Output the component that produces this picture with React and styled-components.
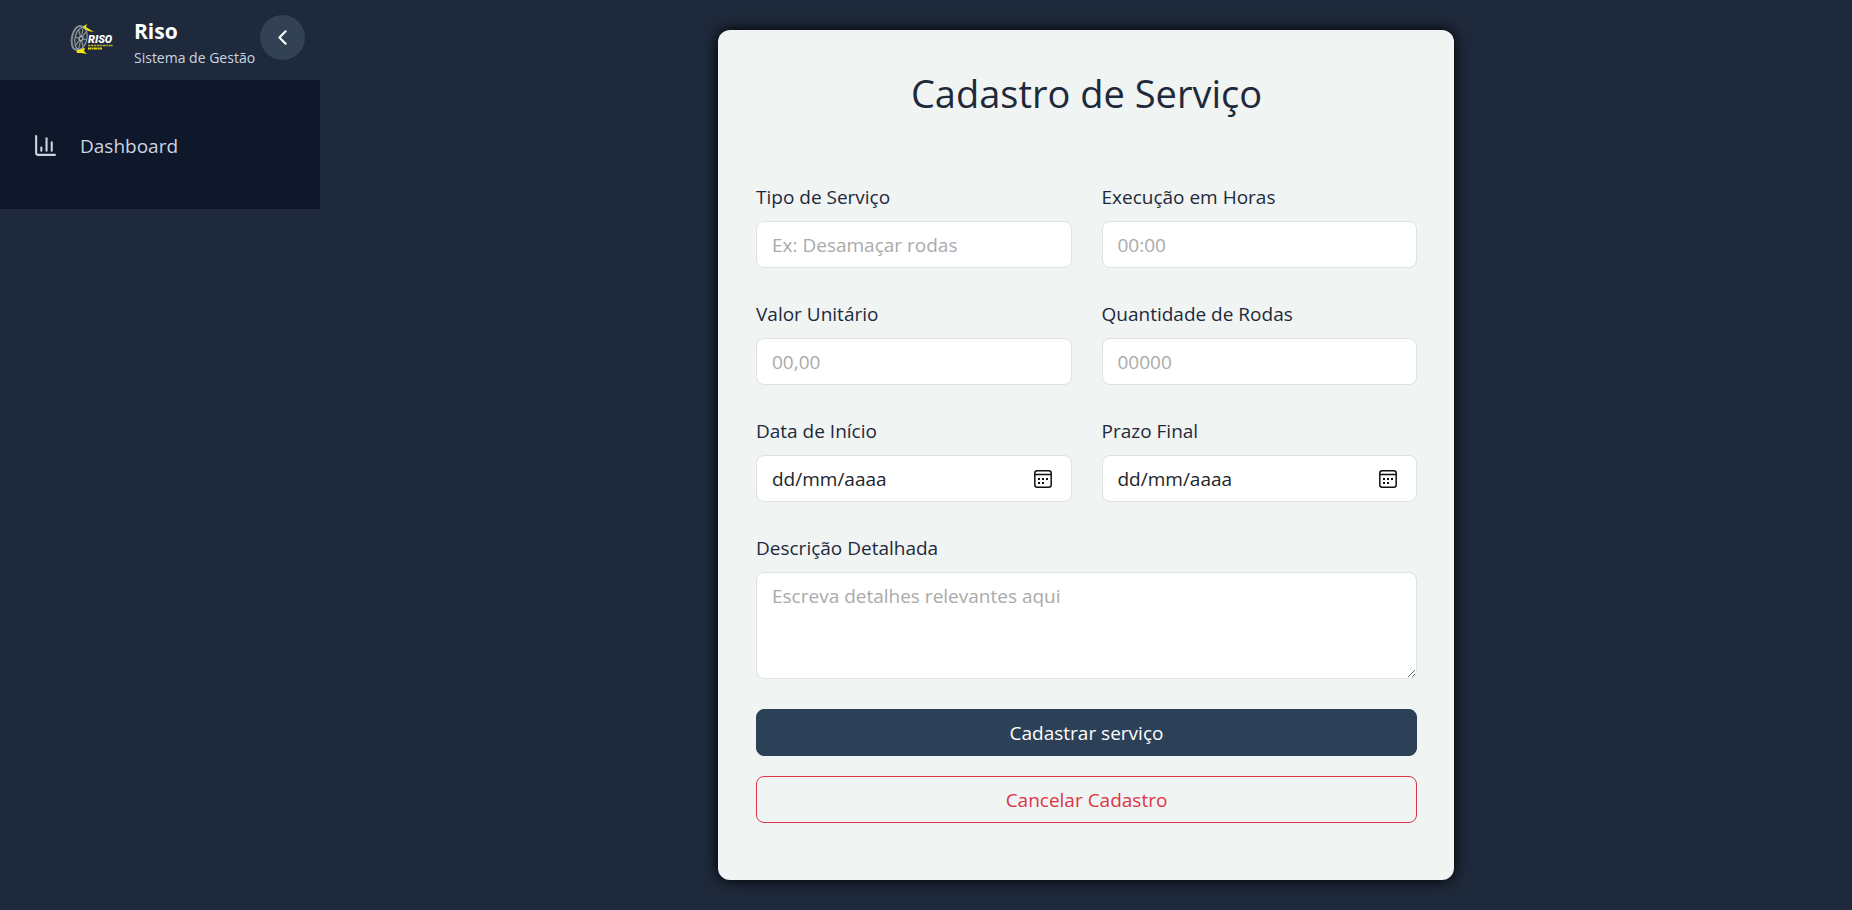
import React from "react";
import styled, { createGlobalStyle } from "styled-components";
import { ChartColumn, ChevronLeft } from "lucide-react";

const GlobalStyle = createGlobalStyle`
  *, *::before, *::after { box-sizing: border-box; }
  body {
    margin: 0;
    background: #1e293b;
    color: #1e293b;
    font-family: "Segoe UI", "Open Sans", "Noto Sans", sans-serif;
    font-size: 19px;
    line-height: 30px;
  }
  h1, p { margin: 0; }
  button, input, textarea { font: inherit; }
`;

const Page = styled.div`
  display: flex;
  min-height: 100vh;
`;

const Sidebar = styled.aside`
  flex: 0 0 320px;
`;

const SidebarHeader = styled.header`
  display: flex;
  align-items: flex-start;
  height: 80px;
  padding: 15px 15px 0 70px;
`;

const Logo = styled.svg`
  flex: none;
  width: 48px;
  height: 32px;
  margin-top: 8px;
`;

const Brand = styled.div`
  flex: 1;
  margin-left: 16px;
  white-space: nowrap;
`;

const BrandName = styled.p`
  color: #fff;
  font-size: 21px;
  font-weight: 700;
  line-height: 33px;
`;

const BrandTagline = styled.p`
  color: #cbd5e1;
  font-size: 14px;
  line-height: 20px;
`;

const ToggleButton = styled.button`
  display: grid;
  place-items: center;
  flex: none;
  width: 45px;
  height: 45px;
  padding: 0;
  border: 0;
  border-radius: 50%;
  background: #334155;
  color: #fff;
  cursor: pointer;
`;

const Nav = styled.nav`
  padding: 31px 0 29px;
  background: #0f172a;
`;

const NavLink = styled.a`
  display: flex;
  align-items: center;
  gap: 22px;
  height: 69px;
  padding: 0 33px;
  color: #cbd5e1;
  text-decoration: none;
`;

const Main = styled.main`
  flex: 1;
  display: flex;
  justify-content: center;
  align-items: flex-start;
  padding: 30px;
`;

const Card = styled.form`
  width: 100%;
  max-width: 736px;
  padding: 39px 37px 57px 38px;
  border-radius: 12px;
  background: #f0f4f3;
  box-shadow: 0 0 15px #000;
`;

const Title = styled.h1`
  margin-bottom: 65px;
  color: #1e293b;
  font-size: 38px;
  font-weight: 400;
  line-height: 48px;
  text-align: center;
`;

const Fields = styled.div`
  display: grid;
  grid-template-columns: 1fr 1fr;
  gap: 31px 30px;
`;

const Field = styled.div`
  display: flex;
  flex-direction: column;
  gap: 9px;
  grid-column: ${({ $wide }) => ($wide ? "1 / -1" : "auto")};
`;

const Label = styled.label`
  line-height: 30px;
`;

const Control = styled.div`
  display: flex;
  align-items: center;
  height: ${({ $tall }) => ($tall ? "107px" : "47px")};
  border: 1px solid #dee2e6;
  border-radius: 8px;
  background: #fff;
  overflow: hidden;
`;

const TextInput = styled.input`
  flex: 1;
  min-width: 0;
  height: 100%;
  padding: 0 15px;
  border: 0;
  outline: 0;
  background: transparent;
  color: #212529;

  &::placeholder {
    color: ${({ $date }) => ($date ? "#212529" : "#aaa")};
    opacity: 1;
  }
`;

const TextArea = styled.textarea`
  flex: 1;
  min-width: 0;
  height: 100%;
  padding: 8px 15px;
  border: 0;
  outline: 0;
  background: transparent;
  color: #212529;
  resize: vertical;

  &::placeholder {
    color: #aaa;
    opacity: 1;
  }
`;

const PickerButton = styled.button`
  display: grid;
  place-items: center;
  width: 20px;
  height: 20px;
  margin-right: 18px;
  padding: 0;
  border: 0;
  background: none;
  color: #111;
  cursor: pointer;
`;

const Actions = styled.div`
  display: grid;
  gap: 20px;
  margin-top: 30px;
`;

const Button = styled.button`
  height: 47px;
  padding: 0 15px;
  border: 1px solid ${({ $outline }) => ($outline ? "#dc3545" : "#2c4058")};
  border-radius: 8px;
  background: ${({ $outline }) => ($outline ? "transparent" : "#2c4058")};
  color: ${({ $outline }) => ($outline ? "#dc3545" : "#fff")};
  cursor: pointer;
`;

function RisoLogo() {
  return (
    <Logo viewBox="0 0 48 32" role="img" aria-label="Riso">
      <path d="M12 4 17 1l-1 3 8 5-6-1Z M6 26l9-1-1 3 3 3-6-1-4 0Z" fill="#f2e308" />
      <g transform="rotate(12 9 15)">
        <ellipse cx="8" cy="15" rx="6" ry="12" fill="#222c38" stroke="#858d97" strokeWidth="2" />
        <ellipse cx="11" cy="15" rx="6" ry="11" fill="#2b3542" stroke="#a3a9b1" strokeWidth="1" />
        <path
          d="M11 4v22M5 15h12M7 7l8 16M15 7 7 23"
          stroke="#9299a2"
          strokeWidth="1"
          fill="none"
        />
        <circle cx="11" cy="15" r="2" fill="#343e4b" stroke="#b6bbc2" strokeWidth="1" />
      </g>
      <text
        x="18"
        y="20"
        fill="#fff"
        fontFamily="Roboto, Liberation Sans, sans-serif"
        fontSize="11"
        fontWeight="900"
        fontStyle="italic"
      >
        RISO
      </text>
      <path d="M18 22.500h25" stroke="#b9ae1c" strokeWidth="1.500" strokeDasharray="2 .6 3 .5" />
      <path d="M18 25.500h14" stroke="#e2d50f" strokeWidth="2" strokeDasharray="3 .5 2 .4" />
    </Logo>
  );
}

function CalendarIcon() {
  return (
    <svg width="18" height="18" viewBox="0 0 18 18" fill="none" aria-hidden="true">
      <rect x=".8" y=".8" width="16.400" height="16.400" rx="2.500" stroke="currentColor" strokeWidth="1.500" />
      <path d="M1 4.500h16" stroke="currentColor" strokeWidth="1.500" />
      <g fill="currentColor">
        <rect x="4" y="8" width="2" height="2" />
        <rect x="8" y="8" width="2" height="2" />
        <rect x="12" y="8" width="2" height="2" />
        <rect x="4" y="12" width="2" height="2" />
        <rect x="8" y="12" width="2" height="2" />
      </g>
    </svg>
  );
}

function InputField({ id, label, placeholder, date }) {
  return (
    <Field>
      <Label htmlFor={id}>{label}</Label>
      <Control>
        <TextInput id={id} name={id} type="text" placeholder={placeholder} $date={date} />
        {date && (
          <PickerButton type="button" aria-label={`Abrir calendário: ${label}`}>
            <CalendarIcon />
          </PickerButton>
        )}
      </Control>
    </Field>
  );
}

export default function App() {
  return (
    <>
      <GlobalStyle />
      <Page>
        <Sidebar>
          <SidebarHeader>
            <RisoLogo />
            <Brand>
              <BrandName>Riso</BrandName>
              <BrandTagline>Sistema de Gestão</BrandTagline>
            </Brand>
            <ToggleButton type="button" aria-label="Recolher menu">
              <ChevronLeft size={25} />
            </ToggleButton>
          </SidebarHeader>
          <Nav>
            <NavLink href="#dashboard">
              <ChartColumn size={25} />
              <span>Dashboard</span>
            </NavLink>
          </Nav>
        </Sidebar>
        <Main>
          <Card onSubmit={(event) => event.preventDefault()}>
            <Title>Cadastro de Serviço</Title>
            <Fields>
              <InputField id="tipo" label="Tipo de Serviço" placeholder="Ex: Desamaçar rodas" />
              <InputField id="horas" label="Execução em Horas" placeholder="00:00" />
              <InputField id="valor" label="Valor Unitário" placeholder="00,00" />
              <InputField id="quantidade" label="Quantidade de Rodas" placeholder="00000" />
              <InputField id="inicio" label="Data de Início" placeholder="dd/mm/aaaa" date />
              <InputField id="prazo" label="Prazo Final" placeholder="dd/mm/aaaa" date />
              <Field $wide>
                <Label htmlFor="descricao">Descrição Detalhada</Label>
                <Control $tall>
                  <TextArea id="descricao" name="descricao" placeholder="Escreva detalhes relevantes aqui" />
                </Control>
              </Field>
            </Fields>
            <Actions>
              <Button type="submit">Cadastrar serviço</Button>
              <Button type="button" $outline>
                Cancelar Cadastro
              </Button>
            </Actions>
          </Card>
        </Main>
      </Page>
    </>
  );
}
